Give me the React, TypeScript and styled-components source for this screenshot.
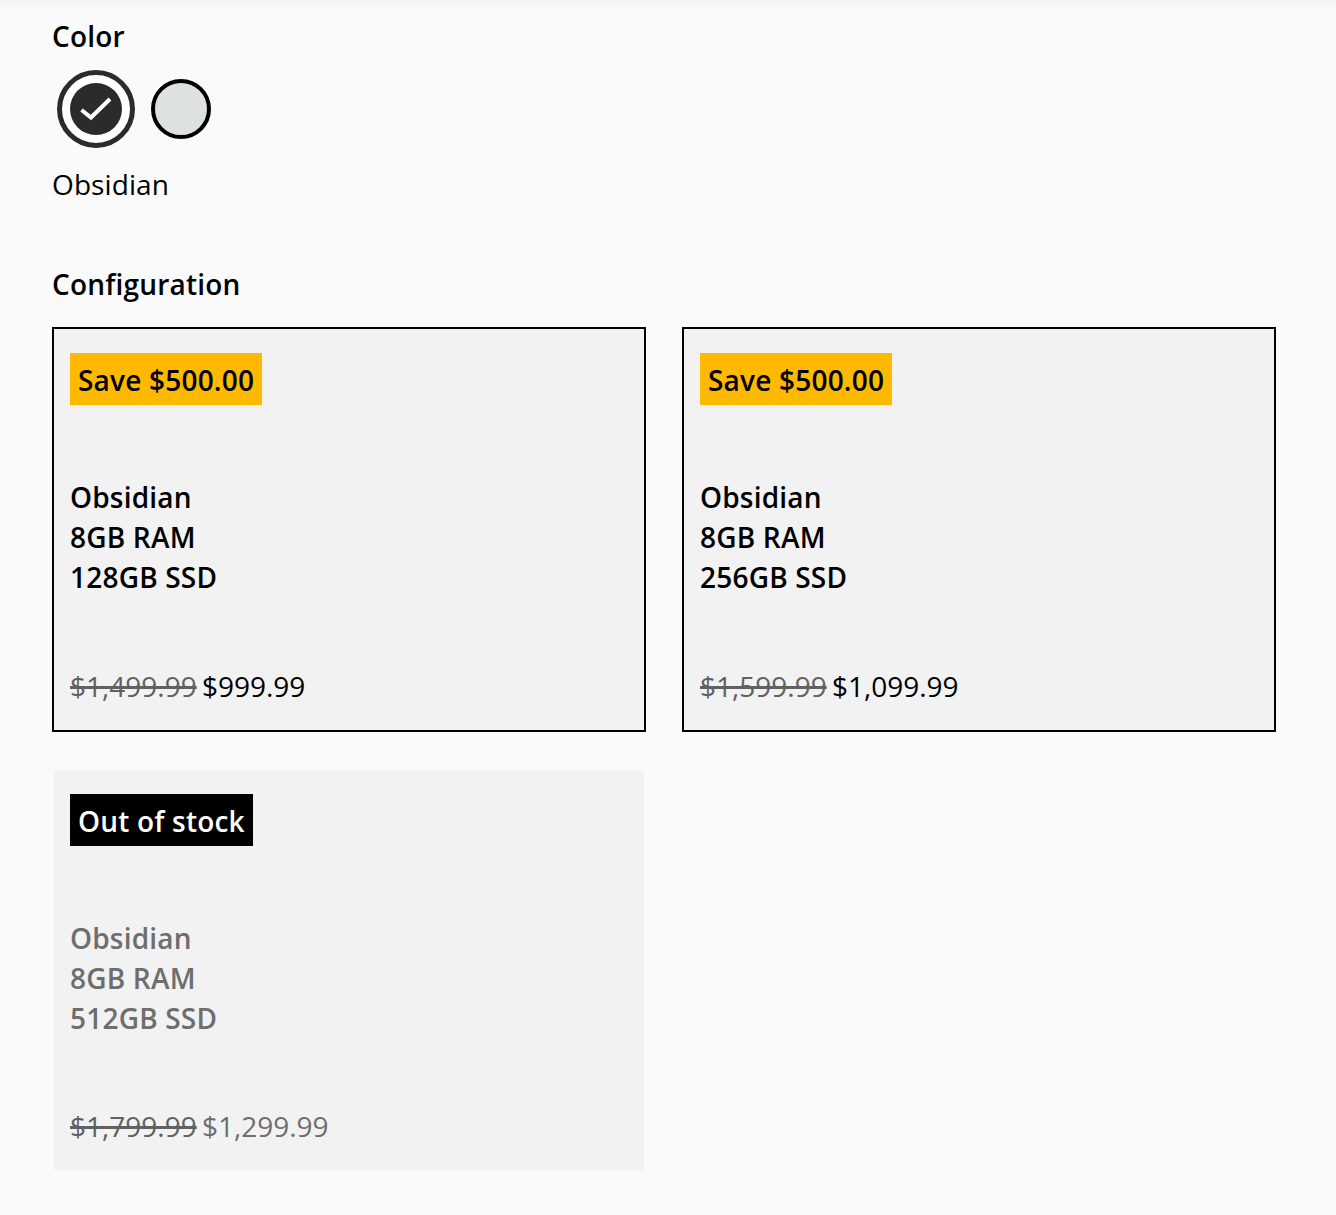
import { createGlobalStyle, styled } from 'styled-components'

const GlobalStyle = createGlobalStyle`
  html, body {
    margin: 0;
    padding: 0;
    background: #fafafa;
  }
  body {
    font-family: "Open Sans", "Noto Sans", sans-serif;
    font-size: 28px;
    line-height: 40px;
    color: #000;
  }
`

const Page = styled.main`
  box-sizing: border-box;
  width: 1336px;
  height: 1215px;
  padding: 16px 60px 0 52px;
  background: linear-gradient(#f2f2f2, #fafafa 10px);
`

const SectionTitle = styled.h2`
  margin: 0;
  font-size: 28px;
  line-height: 40px;
  font-weight: 600;
  letter-spacing: 0.2px;
`

const Swatches = styled.div`
  display: flex;
  align-items: center;
  gap: 16px;
  margin: 14px 0 0 5px;
`

const SelectedRing = styled.div`
  box-sizing: border-box;
  width: 78px;
  height: 78px;
  padding: 8px;
  border: 5px solid #2b2b2d;
  border-radius: 50%;
  background: #fff;
`

const Swatch = styled.div<{ $color: string; $outlined?: boolean }>`
  box-sizing: border-box;
  width: ${({ $outlined }) => ($outlined ? '60px' : '100%')};
  height: ${({ $outlined }) => ($outlined ? '60px' : '100%')};
  display: flex;
  align-items: center;
  justify-content: center;
  border-radius: 50%;
  border: ${({ $outlined }) => ($outlined ? '4px solid #000' : 'none')};
  background: ${({ $color }) => $color};
`

const ColorName = styled.p`
  margin: 16px 0 0;
  letter-spacing: 0.1px;
`

const ConfigSection = styled.section`
  margin-top: 60px;
`

const CardGrid = styled.div`
  display: grid;
  grid-template-columns: 594px 594px;
  gap: 36px;
  margin-top: 23px;
`

const Card = styled.div<{ $disabled?: boolean }>`
  box-sizing: border-box;
  height: 404.5px;
  padding: 24px 16px;
  display: flex;
  flex-direction: column;
  align-items: flex-start;
  background: #f2f2f2;
  border: 2px solid ${({ $disabled }) => ($disabled ? '#fafafa' : '#000')};
  color: ${({ $disabled }) => ($disabled ? '#6e6e6e' : '#000')};
`

const Badge = styled.span<{ $dark?: boolean }>`
  padding: 7px 8px 5px;
  font-weight: 600;
  letter-spacing: 0.2px;
  background: ${({ $dark }) => ($dark ? '#000' : '#ffb900')};
  color: ${({ $dark }) => ($dark ? '#fff' : '#000')};
`

const Specs = styled.div`
  margin-top: 72px;
  font-weight: 600;
  letter-spacing: 0.2px;
`

const Price = styled.div`
  margin-top: auto;
  word-spacing: -2px;
`

const OldPrice = styled.s`
  color: #616161;
  text-decoration-thickness: 3px;
`

const configs = [
  { storage: '128GB SSD', oldPrice: '$1,499.99', price: '$999.99', badge: 'Save $500.00' },
  { storage: '256GB SSD', oldPrice: '$1,599.99', price: '$1,099.99', badge: 'Save $500.00' },
  { storage: '512GB SSD', oldPrice: '$1,799.99', price: '$1,299.99', badge: 'Out of stock', disabled: true },
]

const App = () => {
  return (
    <>
      <GlobalStyle />
      <Page>
        <SectionTitle>Color</SectionTitle>
        <Swatches>
          <SelectedRing>
            <Swatch $color="#2b2b2d">
              <svg width="32" height="24" viewBox="0 0 32 24" fill="none">
                <path d="M1.5 13 L11 20.5 L30 2" stroke="#fff" strokeWidth="4" />
              </svg>
            </Swatch>
          </SelectedRing>
          <Swatch $color="#dee1e1" $outlined />
        </Swatches>
        <ColorName>Obsidian</ColorName>

        <ConfigSection>
          <SectionTitle>Configuration</SectionTitle>
          <CardGrid>
            {configs.map((config) => (
              <Card key={config.storage} $disabled={config.disabled}>
                <Badge $dark={config.disabled}>{config.badge}</Badge>
                <Specs>
                  <div>Obsidian</div>
                  <div>8GB RAM</div>
                  <div>{config.storage}</div>
                </Specs>
                <Price>
                  <OldPrice>{config.oldPrice}</OldPrice> {config.price}
                </Price>
              </Card>
            ))}
          </CardGrid>
        </ConfigSection>
      </Page>
    </>
  )
}

export default App
